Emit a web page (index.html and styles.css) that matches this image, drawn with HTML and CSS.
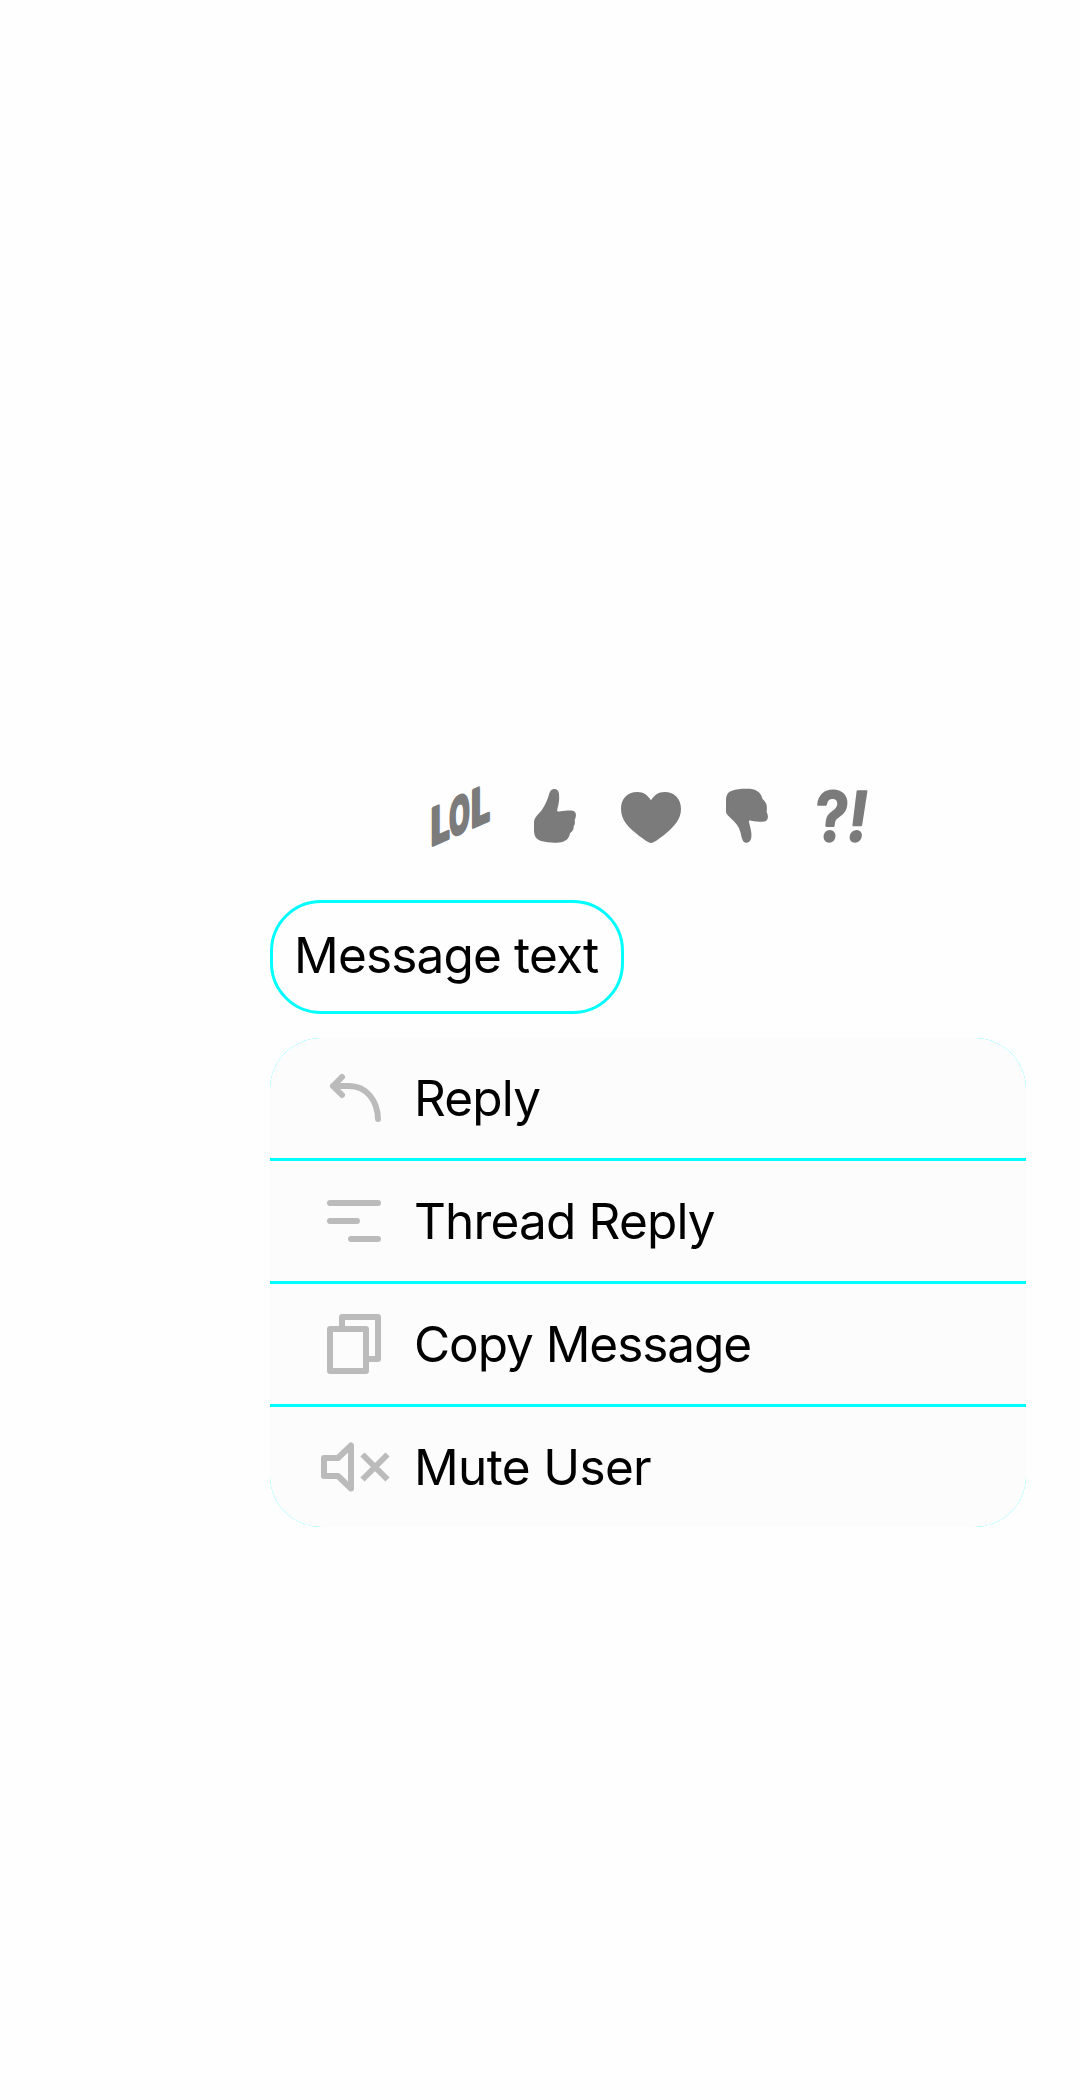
FILE: index.html
```html
<!DOCTYPE html>
<html lang="en">
<head>
<meta charset="utf-8">
<title>Message actions</title>
<link rel="stylesheet" href="styles.css">
</head>
<body>
<main class="overlay">
  <div class="reactions">
    <svg class="reaction" viewBox="33 45 180 180">
      <g class="lol">
        <text transform="matrix(.68 -.303 0 1 30 229)">L</text>
        <text transform="matrix(.52 -.232 0 1 87 203)">O</text>
        <text transform="matrix(.68 -.303 0 1 151 175)">L</text>
      </g>
    </svg>
    <svg class="reaction" viewBox="318 45 180 180"><path d="M403 57C396 57 391 61 388 70C383 88 377 104 365 121C355 134 343 142 342 156V184C343 202 351 210 367 214C385 219 415 220 429 215C442 211 448 202 450 190C458 184 462 177 461 169C466 162 465 156 464 150C468 143 470 130 464 125C456 119 438 122 422 124C413 126 410 124 412 117C416 104 419 88 417 72C416 62 411 57 403 57Z"/></svg>
    <svg class="reaction" viewBox="93 45 180 180"><path d="M183 91C173 76 162 66 142 66C111 66 93 87 93 116C93 147 112 168 136 188C150 200 166 211 176 217Q183 221 190 217C201 211 216 200 230 188C254 167 273 147 273 116C273 87 254 66 224 66C204 66 193 76 183 91Z"/></svg>
    <svg class="reaction" viewBox="378 45 180 180"><path d="M469 218C476 218 480 214 483 207C487 190 481 174 477 157C476 152 478 151 484 152C500 155 518 157 526 154C535 150 536 138 530 126C531 117 531 108 529 102C526 96 522 91 518 88C514 73 506 62 488 58C470 55 442 57 426 62C414 66 409 74 408 87V124C408 133 416 138 424 146C437 157 447 170 451 186C455 200 456 218 469 218Z"/></svg>
    <svg class="reaction" viewBox="45 45 180 180">
      <g class="marks">
        <text transform="matrix(.9 0 -.05 1 54 213)">?</text>
        <text transform="matrix(.92 0 -.14 1 147 213)">!</text>
      </g>
    </svg>
  </div>

  <div class="bubble">Message text</div>

  <ul class="menu">
    <li class="item">
      <svg class="icon" viewBox="0 4 60 60"><path d="M22 13L13 22L22 31M13 22H29C46 22 57.500 36 58 55"/></svg>
      <span class="label">Reply</span>
    </li>
    <li class="item">
      <svg class="icon" viewBox="0 0 60 60"><path d="M10 12H58M10 30H37M31 48H58"/></svg>
      <span class="label">Thread Reply</span>
    </li>
    <li class="item">
      <svg class="icon square" viewBox="0 0 60 60"><path d="M22 12V3H58V45H49M10 15H46V57H10Z"/></svg>
      <span class="label copy">Copy Message</span>
    </li>
    <li class="item">
      <svg class="icon" viewBox="0 0 60 60"><path d="M4 21H18L31 8.500V51.500L18 39H4Z"/><path class="cross" d="M42.500 17.500L67.500 42.500M67.500 17.500L42.500 42.500"/></svg>
      <span class="label user">Mute User</span>
    </li>
  </ul>
</main>
</body>
</html>
```
FILE: styles.css
```css
* { box-sizing: border-box; }

body {
  margin: 0;
  background: #fefefe;
  color: #000;
  font-family: Inter, "Liberation Sans", sans-serif;
  font-size: 49.5px;
}

.overlay {
  display: flex;
  flex-direction: column;
  align-items: flex-start;
  width: 1080px;
  height: 2100px;
  padding: 785px 54px 0 270px;
}

.reactions {
  display: flex;
  gap: 35px;
  height: 60px;
  margin: 0 0 55px 161px;
}

.reaction {
  width: 60px;
  height: 60px;
  fill: #7b7b7b;
  overflow: visible;
}

.lol,
.marks {
  stroke: #7b7b7b;
  stroke-linejoin: round;
}

.lol {
  font: bold 152px "Open Sans", sans-serif;
  stroke-width: 12px;
}

.marks {
  font: 600 205px Inter, sans-serif;
  stroke-width: 7px;
}

.bubble {
  width: 354px;
  height: 114px;
  padding-left: 21px;
  border: 3px solid #00ffff;
  border-radius: 51px;
  line-height: 104px;
  letter-spacing: -0.83px;
  white-space: nowrap;
}

.menu {
  display: grid;
  gap: 3px;
  width: 756px;
  margin: 24px 0 0;
  padding: 0;
  overflow: hidden;
  list-style: none;
  background: #00ffff;
  border-radius: 51px;
}

.item {
  display: flex;
  align-items: center;
  gap: 34px;
  height: 120px;
  padding-left: 50px;
  background: #fcfcfc;
}

.icon {
  width: 60px;
  height: 60px;
  fill: none;
  stroke: #bbb;
  stroke-width: 6px;
  stroke-linecap: round;
  stroke-linejoin: round;
  overflow: visible;
}

.square,
.cross { stroke-linecap: butt; }

.label {
  line-height: 120px;
  letter-spacing: -0.83px;
  white-space: nowrap;
}

.copy { letter-spacing: -1.05px; }
.user { letter-spacing: -0.65px; }
```
